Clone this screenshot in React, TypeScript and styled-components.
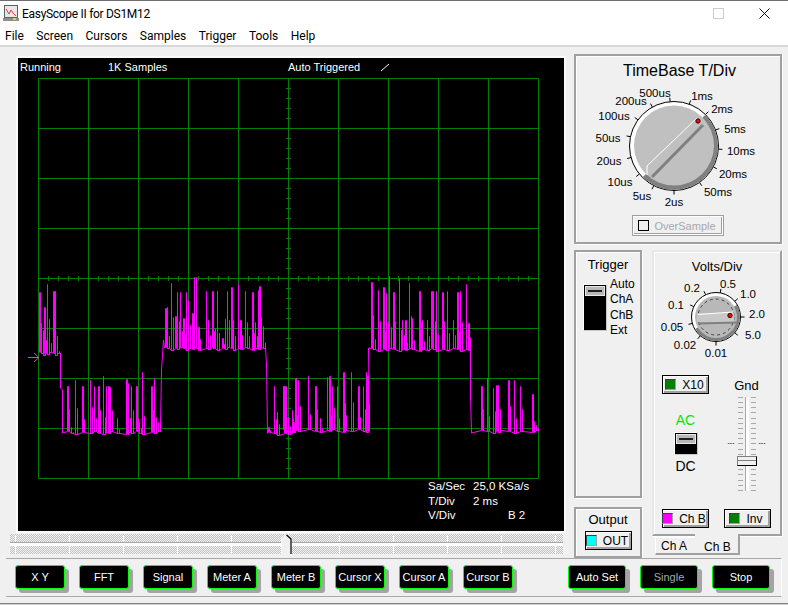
import styled, { createGlobalStyle } from "styled-components"

const GlobalStyle = createGlobalStyle`
    html, body {
        margin: 0;
        padding: 0;
        background: #f0f0f0;
    }
    * {
        box-sizing: border-box;
    }
`

type Spike = [number, number]

// spike positions read off the reference, in zoomed crop coordinates (3x)
const low1: Spike[] = [[157, 348], [167, 470], [180, 330], [200, 348], [224, 330], [236, 348], [250, 348], [265, 318], [272, 348], [279, 348], [285, 350], [307, 445], [333, 328], [339, 340], [348, 348], [363, 348], [372, 456], [380, 306], [408, 348], [418, 325], [428, 456]]
const high1: Spike[] = [[450, 115], [456, 110], [467, 38], [480, 138], [485, 65], [495, 65], [505, 145], [512, 65], [518, 90], [532, 128], [537, 20], [542, 22], [550, 170], [573, 62], [580, 150], [590, 62], [594, 110], [605, 62], [620, 205], [630, 148], [635, 62], [648, 50], [655, 150], [668, 42], [675, 150], [690, 62], [695, 155], [710, 65], [720, 155], [728, 60], [733, 48], [745, 168]]
const low2a: Spike[] = [[760, 470], [778, 348], [785, 425], [808, 348], [820, 440], [835, 445]]
const low2b: Spike[] = [[10, 348], [17, 348], [35, 420], [44, 325], [55, 330], [85, 318], [105, 348], [120, 445], [140, 320], [148, 318], [155, 348], [170, 348], [188, 305], [192, 325], [212, 305], [235, 348], [250, 348], [258, 305], [262, 315]]
const high2: Spike[] = [[272, 35], [280, 135], [295, 60], [310, 50], [318, 70], [326, 18], [340, 65], [358, 25], [366, 150], [375, 150], [388, 40], [395, 145], [418, 62], [425, 150], [442, 150], [452, 62], [460, 62], [468, 62], [485, 65], [500, 62], [518, 150], [530, 65], [540, 62], [558, 42], [565, 160]]
const low3: Spike[] = [[602, 348], [622, 325], [638, 355], [648, 345], [655, 345], [660, 470], [685, 330], [703, 330], [720, 348], [755, 372], [768, 465]]
const start: Spike[] = [[72, 65], [78, 160], [83, 180], [88, 112], [97, 42], [102, 148], [115, 64], [121, 64], [127, 232]]

function plateau(spikes: Spike[], base: number, ox: number, oy: number) {
    const pts: string[] = []
    const px = (x: number) => Math.round(ox + x / 3) + 0.5
    const py = (y: number) => Math.round(oy + y / 3) + 0.5
    const add = (x: number, y: number) => pts.push(`${x},${y}`)
    spikes.forEach(([x, top], i) => {
        const floor = py(base + ((i * 7) % 5) * 2 - 4)
        const left = px(x)
        add(left, floor)
        add(left, py(top))
        // every third spike is drawn two pixels wide
        const right = i % 3 === 0 ? left + 1 : left
        add(right, py(top))
        add(right, floor)
        // each spike has a shorter neighbour, like the signal in the picture
        const mid = floor - (floor - py(top)) * (i % 2 === 0 ? 0.5 : 0.3)
        add(left + 2, floor)
        add(left + 2, Math.round(mid) + 0.5)
        add(left + 2, floor)
    })
    return pts
}

const wavePoints = [
    ...plateau(start, 250, 15, 270),
    "60.5,353", "60.5,388", "62.5,390", "62.5,433",
    ...plateau(low1, 488, 15, 270),
    "160.5,425", "161.5,370", "163.5,340", "164.5,348",
    ...plateau(high1, 235, 15, 270),
    "266.5,364", "267.5,433",
    ...plateau(low2a, 490, 15, 270),
    ...plateau(low2b, 482, 280, 270),
    "368.5,348",
    ...plateau(high2, 238, 280, 270),
    "470.5,395", "471.5,433",
    ...plateau(low3, 484, 280, 270),
    "538,429",
].join(" ")

const gridX = Array.from({ length: 11 }, (_, i) => 38.5 + i * 50)
const gridY = Array.from({ length: 9 }, (_, i) => 78.5 + i * 50)
const tickX = Array.from({ length: 51 }, (_, i) => 38.5 + i * 10)
const tickY = Array.from({ length: 41 }, (_, i) => 78.5 + i * 10)

function ScopePlot() {
    return (
        <PlotSvg viewBox="18 78 546 402" width={546} height={402}>
            <g stroke="#008000" strokeWidth={1} fill="none">
                {gridX.map((x) => <line key={x} x1={x} y1={78.5} x2={x} y2={478.5} />)}
                {gridY.map((y) => <line key={y} x1={38.5} y1={y} x2={538.5} y2={y} />)}
                {tickX.map((x) => <line key={x} x1={x} y1={276} x2={x} y2={281} />)}
                {tickY.map((y) => <line key={y} x1={286} y1={y} x2={291} y2={y} />)}
            </g>
            <polyline points={wavePoints} fill="none" stroke="#ff00ff" strokeWidth={1} />
            <path d="M28 357.5H39M34 353l5 4.500-5 4.500" fill="none" stroke="#c050c0" strokeWidth={1} />
        </PlotSvg>
    )
}

interface DialLabel {
    text: string
    angle: number
    x: number
    y: number
}

const timeLabels: DialLabel[] = [
    { text: "500us", angle: 355, x: 655, y: 92 },
    { text: "1ms", angle: 20, x: 702, y: 95 },
    { text: "2ms", angle: 45, x: 722, y: 108 },
    { text: "5ms", angle: 69, x: 735, y: 128 },
    { text: "10ms", angle: 94, x: 741, y: 150 },
    { text: "20ms", angle: 118, x: 733, y: 173 },
    { text: "50ms", angle: 145, x: 718, y: 191 },
    { text: "2us", angle: 180, x: 674, y: 201 },
    { text: "5us", angle: 207, x: 642, y: 195 },
    { text: "10us", angle: 231, x: 620, y: 181 },
    { text: "20us", angle: 255, x: 609, y: 160 },
    { text: "50us", angle: 282, x: 608, y: 137 },
    { text: "100us", angle: 306, x: 614, y: 115 },
    { text: "200us", angle: 331, x: 631, y: 100 },
]

const voltLabels: DialLabel[] = [
    { text: "0.5", angle: 10, x: 728, y: 285 },
    { text: "1.0", angle: 50, x: 748, y: 295 },
    { text: "2.0", angle: 90, x: 757, y: 315 },
    { text: "5.0", angle: 130, x: 753, y: 336 },
    { text: "0.01", angle: 180, x: 716, y: 354 },
    { text: "0.02", angle: 220, x: 685, y: 346 },
    { text: "0.05", angle: 255, x: 672, y: 328 },
    { text: "0.1", angle: 295, x: 676, y: 306 },
    { text: "0.2", angle: 335, x: 692, y: 289 },
]

function polar(cx: number, cy: number, r: number, deg: number) {
    const a = (deg * Math.PI) / 180
    return { x: cx + r * Math.sin(a), y: cy - r * Math.cos(a) }
}

interface DialProps {
    cx: number
    cy: number
    r: number
    labels: DialLabel[]
    fontSize: number
}

function DialTicks({ cx, cy, r, labels, fontSize }: DialProps) {
    return (
        <>
            {labels.map((l) => {
                const a = polar(cx, cy, r, l.angle)
                const b = polar(cx, cy, r + 4, l.angle)
                return <line key={l.text} x1={a.x} y1={a.y} x2={b.x} y2={b.y} stroke="#000" />
            })}
            {labels.map((l) => (
                <text key={l.text} x={l.x} y={l.y + 4.5} fontSize={fontSize} textAnchor="middle" fill="#000" fontFamily="'Liberation Sans', Arial, sans-serif">
                    {l.text}
                </text>
            ))}
        </>
    )
}

// the knob body: white lit half and grey shaded half, split along the pointer direction
function halfPath(cx: number, cy: number, r: number, fromDeg: number) {
    const a = polar(cx, cy, r, fromDeg)
    const b = polar(cx, cy, r, fromDeg + 180)
    return `M${a.x} ${a.y}A${r} ${r} 0 0 1 ${b.x} ${b.y}Z`
}

function TimeDial() {
    const cx = 674
    const cy = 146
    return (
        <DialSvg viewBox="576 82 204 128" width={204} height={128}>
            <DialTicks cx={cx} cy={cy} r={44.5} labels={timeLabels} fontSize={11.5} />
            <circle cx={cx} cy={cy} r={44.5} fill="#fff" stroke="#000" />
            <path d={halfPath(cx, cy, 44, 45)} fill="#808080" />
            <circle cx={cx} cy={cy - 0.5} r={40} fill="#c0c0c0" />
            <path d="M700 125L703 121V125L652 176L646 174Z" fill="#c0c0c0" />
            <path d="M697 118L647 166V175" fill="none" stroke="#fff" strokeWidth={1} />
            <path d="M703 125L652 177" fill="none" stroke="#808080" strokeWidth={3} />
            <circle cx={698} cy={121} r={2.2} fill="#f00" stroke="#000" strokeWidth={0.8} />
        </DialSvg>
    )
}

function VoltDial() {
    const cx = 716
    const cy = 319
    return (
        <DialSvg viewBox="655 276 124 86" width={124} height={86}>
            <DialTicks cx={cx} cy={cy} r={24.5} labels={voltLabels} fontSize={11.5} />
            <circle cx={cx} cy={cy} r={24.5} fill="#fff" stroke="#000" />
            <path d={halfPath(cx, cy, 24, 60)} fill="#808080" />
            <circle cx={cx} cy={cy} r={21} fill="#b8b8b8" />
            <circle cx={cx} cy={cy} r={18} fill="none" stroke="#404040" strokeDasharray="3 3" />
            <rect x={697} y={315} width={37} height={9} fill="#c8c8c8" />
            <path d="M698 316.500L733 314" stroke="#fff" fill="none" />
            <path d="M698 325.500L737 324.500" stroke="#808080" strokeWidth={2} fill="none" />
            <circle cx={730} cy={317.5} r={2.2} fill="#f00" stroke="#000" strokeWidth={0.8} />
        </DialSvg>
    )
}

function AppIcon() {
    return (
        <svg width={16} height={17} viewBox="0 0 16 17">
            <rect x={1.5} y={0.5} width={13} height={12} fill="#e8e8e8" stroke="#606060" />
            <path d="M3 4L6 9L8 5L10 8L13 11" fill="none" stroke="#e04040" />
            <rect x={0} y={13} width={16} height={3} fill="#909090" />
            <rect x={10} y={13} width={3} height={2} fill="#e0d040" />
        </svg>
    )
}

interface ToggleProps {
    color: string
    label: string
}

function ToggleButton({ color, label }: ToggleProps) {
    return (
        <ToggleBox>
            <Lamp $color={color} />
            <span>{label}</span>
        </ToggleBox>
    )
}

const leftButtons = ["X Y", "FFT", "Signal", "Meter A", "Meter B", "Cursor X", "Cursor A", "Cursor B"]
const menus = ["File", "Screen", "Cursors", "Samples", "Trigger", "Tools", "Help"]
const modes = ["Auto", "ChA", "ChB", "Ext"]
const scaleTicks = Array.from({ length: 19 }, (_, i) => i)

export default function App() {
    return (
        <Window>
            <GlobalStyle />
            <TitleBar>
                <AppIcon />
                <TitleText>EasyScope II for DS1M12</TitleText>
                <WinControls>
                    <MaxGlyph />
                    <svg width={11} height={11} viewBox="0 0 11 11">
                        <path d="M.5.5l10 10M10.500.5l-10 10" stroke="#111" fill="none" />
                    </svg>
                </WinControls>
            </TitleBar>
            <MenuBar>
                {menus.map((m) => <MenuItem key={m}>{m}</MenuItem>)}
            </MenuBar>
            <Body>
                <LeftColumn>
                    <Screen>
                        <StatusRow>
                            <StatusText $width={88}>Running</StatusText>
                            <StatusText $width={180}>1K Samples</StatusText>
                            <StatusText $width={92}>Auto Triggered</StatusText>
                            <svg width={10} height={9} viewBox="0 0 10 9">
                                <path d="M1 8L9 1" stroke="#fff" fill="none" />
                            </svg>
                        </StatusRow>
                        <ScopePlot />
                        <Readout>
                            <span>Sa/Sec</span><span>25,0 KSa/s</span><span />
                            <span>T/Div</span><span>2 ms</span><span />
                            <span>V/Div</span><span />
                            <span>B 2</span>
                        </Readout>
                    </Screen>
                    <SliderTrack>
                        <SliderSlot />
                        <SliderThumb width={11} height={20} viewBox="0 0 11 20">
                            <path d="M.5 20V5L5 .5 10 5V20" fill="#f0f0f0" stroke="#fff" />
                            <path d="M5.500 1L10 5V20" fill="none" stroke="#000" strokeWidth={1.2} />
                        </SliderThumb>
                    </SliderTrack>
                </LeftColumn>
                <RightColumn>
                    <TimePanel>
                        <TimeTitle>TimeBase T/Div</TimeTitle>
                        <TimeDial />
                        <ToggleRow>
                            <OverSample>
                                <CheckBox />
                                <span>OverSample</span>
                            </OverSample>
                        </ToggleRow>
                    </TimePanel>
                    <LowerRow>
                        <LowerLeft>
                            <TriggerPanel>
                                <SmallTitle>Trigger</SmallTitle>
                                <TriggerBody>
                                    <SwitchBody $height={47}>
                                        <SwitchThumb />
                                    </SwitchBody>
                                    <ModeList>
                                        {modes.map((m) => <span key={m}>{m}</span>)}
                                    </ModeList>
                                </TriggerBody>
                            </TriggerPanel>
                            <OutputPanel>
                                <SmallTitle>Output</SmallTitle>
                                <ToggleButton color="#00ffff" label="OUT" />
                            </OutputPanel>
                        </LowerLeft>
                        <LowerRight>
                            <VoltPanel>
                                <SmallTitle>Volts/Div</SmallTitle>
                                <VoltDial />
                                <VoltGrid>
                                    <CouplingColumn>
                                        <ToggleButton color="#008000" label="X10" />
                                        <CouplingLabel $color="#00e800">AC</CouplingLabel>
                                        <SwitchBody $height={23}>
                                            <SwitchThumb />
                                        </SwitchBody>
                                        <CouplingLabel $color="#000">DC</CouplingLabel>
                                    </CouplingColumn>
                                    <GndColumn>
                                        <SmallTitle>Gnd</SmallTitle>
                                        <Fader>
                                            <FaderScale>
                                                {scaleTicks.map((t) => <i key={t} />)}
                                            </FaderScale>
                                            <FaderRail />
                                            <FaderScale>
                                                {scaleTicks.map((t) => <i key={t} />)}
                                            </FaderScale>
                                            <ZeroMark $side="left">---</ZeroMark>
                                            <ZeroMark $side="right">---</ZeroMark>
                                            <FaderThumb />
                                        </Fader>
                                    </GndColumn>
                                </VoltGrid>
                                <ChannelRow>
                                    <ToggleButton color="#ff00ff" label="Ch B" />
                                    <ToggleButton color="#008000" label="Inv" />
                                </ChannelRow>
                            </VoltPanel>
                            <TabRow>
                                <Tab>Ch A</Tab>
                                <Tab $active>Ch B</Tab>
                            </TabRow>
                        </LowerRight>
                    </LowerRow>
                </RightColumn>
            </Body>
            <ButtonBar>
                {leftButtons.map((b) => <ScopeButton key={b}>{b}</ScopeButton>)}
                <RunGroup>
                    <ScopeButton $wide>Auto Set</ScopeButton>
                    <ScopeButton $wide $dim>Single</ScopeButton>
                    <ScopeButton $wide>Stop</ScopeButton>
                </RunGroup>
            </ButtonBar>
            <BottomEdge />
        </Window>
    )
}

const sans = `"Liberation Sans", Arial, sans-serif`

const Window = styled.div`
    width: 788px;
    height: 605px;
    overflow: hidden;
    background: #f0f0f0;
    display: flex;
    flex-direction: column;
    font-family: ${sans};
    color: #000;
`

const TitleBar = styled.div`
    height: 26px;
    flex: none;
    background: #fff;
    border-top: 1px solid #6e6e6e;
    display: flex;
    align-items: center;
    padding-left: 3px;
`

const TitleText = styled.span`
    margin-left: 3px;
    font-family: Roboto, sans-serif;
    font-size: 12px;
    letter-spacing: -0.3px;
`

const WinControls = styled.div`
    margin-left: auto;
    margin-right: 18px;
    display: flex;
    align-items: center;
    gap: 35px;
`

const MaxGlyph = styled.div`
    width: 11px;
    height: 11px;
    border: 1px solid #cccccc;
`

const MenuBar = styled.div`
    height: 21px;
    flex: none;
    background: #fff;
    border-bottom: 2px solid #d8d8d8;
    display: flex;
    align-items: center;
    padding-left: 5px;
    gap: 12.5px;
`

const MenuItem = styled.span`
    font-family: Roboto, sans-serif;
    font-size: 12px;
`

const Body = styled.div`
    height: 511px;
    flex: none;
    display: flex;
    padding-top: 8px;
`

const LeftColumn = styled.div`
    width: 574px;
    flex: none;
    padding-left: 18px;
    padding-top: 3px;
`

const Screen = styled.div`
    width: 546px;
    height: 473px;
    background: #000;
    color: #fff;
    font-size: 11px;
    display: flex;
    flex-direction: column;
    box-shadow: 0 0 0 2px #fafafa;
`

const StatusRow = styled.div`
    height: 20px;
    flex: none;
    display: flex;
    align-items: center;
    padding: 0 0 2px 2px;
`

const StatusText = styled.span<{ $width: number }>`
    width: ${(p) => p.$width}px;
    flex: none;
`

const PlotSvg = styled.svg`
    display: block;
    flex: none;
`

const Readout = styled.div`
    display: grid;
    grid-template-columns: 45px 35px 20px;
    grid-auto-rows: 14.5px;
    margin: -1px 0 0 410px;
    font-size: 11.5px;
    line-height: 14.5px;
    white-space: nowrap;
`

const SliderTrack = styled.div`
    position: relative;
    margin: 3px 0 0 -8px;
    width: 553px;
    height: 20px;
    background: repeating-conic-gradient(#c0c0c0 0 25%, #f4f4f4 0 50%) 0 0 / 2px 2px;
    display: flex;
    align-items: center;

    &::before {
        content: "";
        position: absolute;
        inset: 1px 0;
        background: repeating-linear-gradient(90deg, transparent 0 5px, #fff 5px 6px, transparent 6px 54px);
    }
`

const SliderSlot = styled.div`
    position: relative;
    width: 100%;
    height: 4px;
    background: #fff;
    border-top: 1px solid #a8a8a8;
`

const SliderThumb = styled.svg`
    position: absolute;
    left: 271px;
    top: 0;
`

const RightColumn = styled.div`
    width: 208px;
    flex: none;
    display: flex;
    flex-direction: column;
    gap: 6px;
    margin-top: -1px;
`

const Panel = styled.div`
    border: 2px solid #a0a0a0;
    box-shadow: 1px 1px 0 #fff, inset 1px 1px 0 #fff;
    background: #f0f0f0;
`

const TimePanel = styled(Panel)`
    height: 190px;
    display: flex;
    flex-direction: column;
    align-items: center;
    padding-top: 6px;
`

const TimeTitle = styled.div`
    font-size: 16px;
    line-height: 18px;
    height: 20px;
    padding-left: 3px;
`

const DialSvg = styled.svg`
    display: block;
    flex: none;
`

const ToggleRow = styled.div`
    display: flex;
    justify-content: center;
    margin-top: 6px;
`

const ToggleBox = styled.div`
    width: 47px;
    height: 19px;
    flex: none;
    display: flex;
    align-items: center;
    justify-content: center;
    gap: 6px;
    background: #f0f0f0;
    border: 1px solid #000;
    box-shadow: inset 1px 1px 0 #fff, inset -2px -2px 0 #a0a0a0;
    font-size: 12px;
    white-space: nowrap;
    padding: 0 2px 0 0;
`

const OverSample = styled(ToggleBox)`
    width: 90px;
    color: #a8a8a8;
    font-size: 11px;
    gap: 5px;
    border-color: #fff;
    box-shadow: 0 0 0 1px #a0a0a0, inset -1px -1px 0 #a0a0a0;
`

const CheckBox = styled.div`
    width: 11px;
    height: 11px;
    border: 1px solid #000;
    background: #f0f0f0;
`

const Lamp = styled.div<{ $color: string }>`
    width: 11px;
    height: 11px;
    flex: none;
    background: ${(p) => p.$color};
    border: 1px solid #404040;
    border-right-color: #a0a0a0;
    border-bottom-color: #a0a0a0;
`

const LowerRow = styled.div`
    display: flex;
    gap: 11px;
`

const LowerLeft = styled.div`
    width: 68px;
    flex: none;
    display: flex;
    flex-direction: column;
    gap: 9px;
`

const TriggerPanel = styled(Panel)`
    height: 248px;
    padding-top: 5px;
`

const SmallTitle = styled.div`
    font-size: 13px;
    line-height: 15px;
    text-align: center;
`

const TriggerBody = styled.div`
    display: flex;
    margin-top: 12px;
    padding-left: 7px;
    gap: 3px;
`

const SwitchBody = styled.div<{ $height: number }>`
    width: 24px;
    height: ${(p) => p.$height}px;
    background: #000;
    border: 1px solid #fff;
    border-right-color: #c8c8c8;
    border-bottom-color: #c8c8c8;
`

const SwitchThumb = styled.div`
    height: 12px;
    background: #b8b8b8;
    border: 1px solid #000;
    box-shadow: inset 0 0 0 1px #e8e8e8;
    display: flex;
    align-items: center;
    justify-content: center;

    &::after {
        content: "";
        width: 14px;
        height: 2px;
        background: #202020;
    }
`

const ModeList = styled.div`
    display: flex;
    flex-direction: column;
    font-size: 12px;
    line-height: 15.3px;
    margin-top: -7px;
`

const OutputPanel = styled(Panel)`
    height: 51px;
    display: flex;
    flex-direction: column;
    align-items: center;
    padding-top: 3px;
    gap: 4px;
`

const LowerRight = styled.div`
    width: 129px;
    flex: none;
`

const VoltPanel = styled(Panel)`
    height: 286px;
    border-top-color: #e8e8e8;
    border-left-color: #e8e8e8;
    padding-top: 7px;
    margin-left: -1px;
    display: flex;
    flex-direction: column;
    align-items: center;
`

const VoltGrid = styled.div`
    display: flex;
    width: 100%;
    margin-top: 15px;
    height: 126px;
    padding-left: 8px;
`

const CouplingColumn = styled.div`
    width: 47px;
    display: flex;
    flex-direction: column;
    align-items: center;
`

const CouplingLabel = styled.div<{ $color: string }>`
    color: ${(p) => p.$color};
    font-size: 14px;
    line-height: 16px;
    margin: 18px 0 4px;

    & ~ & {
        margin: 3px 0 0;
    }
`

const GndColumn = styled.div`
    margin-left: 14px;
    width: 47px;
    padding-top: 3px;
    display: flex;
    flex-direction: column;
    align-items: center;
`

const Fader = styled.div`
    position: relative;
    margin-top: 4px;
    height: 94px;
    display: flex;
    justify-content: center;
    gap: 2px;
`

const FaderScale = styled.div`
    width: 5px;
    display: flex;
    flex-direction: column;
    justify-content: space-between;

    & > i {
        display: block;
        height: 1px;
        background: #a8a8a8;
    }
`

const FaderRail = styled.div`
    width: 4px;
    background: #fff;
    border-left: 1px solid #a8a8a8;
`

const ZeroMark = styled.span<{ $side: "left" | "right" }>`
    position: absolute;
    top: 41px;
    ${(p) => p.$side}: -10px;
    font-size: 7px;
    line-height: 10px;
`

const FaderThumb = styled.div`
    position: absolute;
    left: -1px;
    top: 59px;
    width: 20px;
    height: 10px;
    background: #f0f0f0;
    border: 1px solid #000;
    border-top-color: #808080;
    border-left-color: #808080;

    &::after {
        content: "";
        display: block;
        margin-top: 3px;
        height: 1px;
        background: #808080;
    }
`

const ChannelRow = styled.div`
    display: flex;
    gap: 15px;
    margin: 8px 0 0 -2px;
`

const TabRow = styled.div`
    display: flex;
    padding-left: 2px;
    align-items: flex-start;
`

const Tab = styled.div<{ $active?: boolean }>`
    width: ${(p) => (p.$active ? 45 : 40)}px;
    height: ${(p) => (p.$active ? 21 : 18)}px;
    font-size: 12px;
    padding-left: ${(p) => (p.$active ? 9 : 5)}px;
    line-height: ${(p) => (p.$active ? 27 : 17)}px;
    margin-top: ${(p) => (p.$active ? -2 : 1)}px;
    background: #f0f0f0;
    border-right: ${(p) => (p.$active ? "2px solid #a0a0a0" : "none")};
    border-bottom: 2px solid #a0a0a0;
    border-top: ${(p) => (p.$active ? "none" : "1px solid #fff")};
    border-left: ${(p) => (p.$active ? "none" : "1px solid #fff")};
    position: relative;
    z-index: ${(p) => (p.$active ? 1 : 0)};
`

const ButtonBar = styled.div`
    width: 776px;
    height: 39px;
    flex: none;
    margin-left: 6px;
    border-top: 1px solid #a8a8a8;
    border-bottom: 1px solid #a8a8a8;
    border-right: 1px solid #fff;
    display: flex;
    align-items: flex-start;
    padding: 6px 0 0 9px;
    gap: 14px;
`

const ScopeButton = styled.div<{ $wide?: boolean; $dim?: boolean }>`
    width: ${(p) => (p.$wide ? 58 : 50)}px;
    height: 24px;
    flex: none;
    background: #000;
    color: ${(p) => (p.$dim ? "#a0a8b0" : "#fff")};
    border: 1px solid #00ff00;
    border-radius: 3px;
    box-shadow: 4px 4px 0 #a4a4a4;
    font-size: 11px;
    line-height: 22px;
    text-align: center;
    white-space: nowrap;
`

const RunGroup = styled.div`
    display: flex;
    gap: 14px;
    margin-left: 41px;
`

const BottomEdge = styled.div`
    flex: none;
    margin-top: 6px;
    height: 2px;
    background: #d0d0d0;
    border-top: 1px solid #808080;
`
